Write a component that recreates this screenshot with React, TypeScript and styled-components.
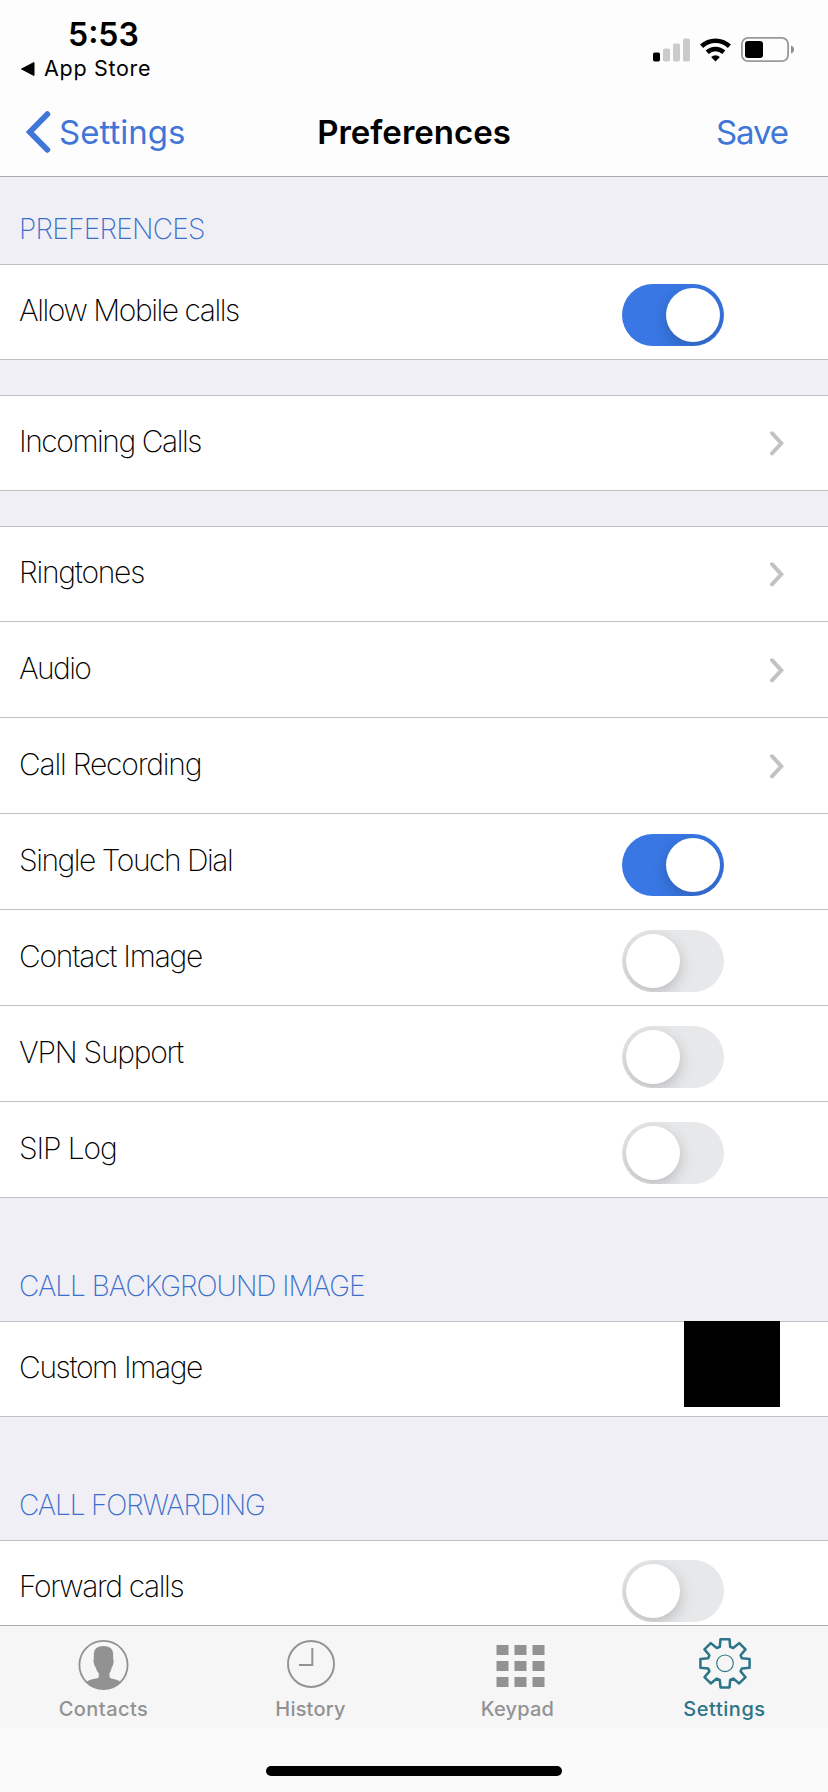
import React from "react";
import styled, { createGlobalStyle } from "styled-components";

const GlobalStyle = createGlobalStyle`
  * { box-sizing: border-box; }
  body { margin: 0; background: #f0eff5; }
`;

const Screen = styled.div`
  width: 828px;
  height: 1792px;
  display: flex;
  flex-direction: column;
  overflow: hidden;
  background: #f0eff5;
  color: #000;
  font-family: Inter, "Liberation Sans", sans-serif;
  white-space: nowrap;
`;

const Header = styled.header`
  height: 177px;
  flex: none;
  display: flex;
  flex-direction: column;
  background: #fdfdfd;
  border-bottom: 1px solid #a8a8ac;
`;

const StatusBar = styled.div`
  height: 88px;
  display: flex;
  justify-content: space-between;
  padding: 18px 34px 0 20px;
`;

const StatusLeft = styled.div`
  display: flex;
  flex-direction: column;
`;

const Time = styled.div`
  padding-left: 48px;
  font-size: 32px;
  line-height: 33px;
  font-weight: 600;
`;

const BackToApp = styled.div`
  display: flex;
  align-items: center;
  gap: 9px;
  padding-left: 1px;
  margin-top: 3px;
  font-size: 21.5px;
  line-height: 29px;
  font-weight: 400;
  letter-spacing: 0.7px;
`;

const StatusIcons = styled.div`
  display: flex;
  align-items: flex-end;
  height: 44px;
  gap: 10px;
`;

const NavBar = styled.nav`
  height: 88px;
  display: grid;
  grid-template-columns: 1fr auto 1fr;
  align-items: center;
  padding: 0 26px;
  font-size: 33px;
  line-height: 40px;
`;

const BackButton = styled.a`
  display: flex;
  align-items: center;
  gap: 8px;
  color: #3f76d8;
`;

const NavTitle = styled.h1`
  margin: 0;
  font-size: inherit;
  font-weight: 600;
`;

const SaveButton = styled.a`
  justify-self: end;
  margin-right: 14px;
  color: #3f76d8;
  letter-spacing: -1.1px;
`;

const Content = styled.main`
  flex: 1;
  min-height: 0;
  overflow: hidden;
`;

const SectionTitle = styled.h2<{ $height: number; $tracking: number }>`
  height: ${(p) => p.$height}px;
  margin: 0;
  padding: 0 0 20px 19px;
  display: flex;
  align-items: flex-end;
  font-size: 28px;
  line-height: 30px;
  font-weight: 200;
  letter-spacing: ${(p) => p.$tracking}px;
  color: #3a6fcb;
`;

const Group = styled.section`
  background: #fff;
  box-shadow: inset 0 1px #c1c1c5;
  & + & { margin-top: 35px; }
`;

const Row = styled.div`
  height: 96px;
  display: flex;
  align-items: flex-start;
  justify-content: space-between;
  border-bottom: 1px solid #c1c1c5;
`;

const RowLabel = styled.span<{ $tracking: number }>`
  padding-left: 19px;
  font-size: 30px;
  line-height: 92px;
  font-weight: 200;
  letter-spacing: ${(p) => p.$tracking}px;
`;

const Toggle = styled.span<{ $on?: boolean }>`
  width: 102px;
  height: 62px;
  margin: 20px 104px 0 0;
  padding: 4px;
  display: flex;
  justify-content: ${(p) => (p.$on ? "flex-end" : "flex-start")};
  border-radius: 31px;
  overflow: hidden;
  background: ${(p) => (p.$on ? "#3977e4" : "#e7e8ea")};
`;

const Knob = styled.span`
  width: 54px;
  height: 54px;
  border-radius: 50%;
  background: #fff;
  box-shadow: 0 5px 15px rgba(0, 0, 0, 0.2);
`;

const Disclosure = styled.svg`
  margin: 36px 44px 0 0;
`;

const ImageWell = styled.span`
  width: 96px;
  height: 86px;
  margin-right: 48px;
  background: #000;
`;

const TabBar = styled.footer`
  height: 167px;
  flex: none;
  display: flex;
  flex-direction: column;
  align-items: center;
  border-top: 1px solid #a9abac;
  background: linear-gradient(#f6f6f6 102px, #fafafa 102px);
`;

const Tabs = styled.div`
  width: 100%;
  height: 140px;
  display: grid;
  grid-template-columns: repeat(4, 1fr);
`;

const Tab = styled.a<{ $active?: boolean; $tracking: number }>`
  display: flex;
  flex-direction: column;
  align-items: center;
  padding-top: 10px;
  font-size: 20px;
  font-weight: 500;
  line-height: 26px;
  letter-spacing: ${(p) => p.$tracking}px;
  color: ${(p) => (p.$active ? "#2c7488" : "#929292")};
`;

const TabIcon = styled.svg`
  width: 60px;
  height: 56px;
  margin-bottom: 4px;
  overflow: visible;
`;

const HomeIndicator = styled.div`
  width: 296px;
  height: 10px;
  border-radius: 5px;
  background: #000;
`;

const SignalIcon = () => (
  <svg width="37" height="24" viewBox="0 0 37 24">
    <rect x="0" y="14.5" width="7" height="9" rx="1.7" fill="#000" />
    <g fill="#cbcbcb">
      <rect x="10" y="10.5" width="7" height="13" rx="1.7" />
      <rect x="20" y="5.5" width="7" height="18" rx="1.7" />
      <rect x="30" y="0.5" width="7" height="23" rx="1.7" />
    </g>
  </svg>
);

const WifiIcon = () => (
  <svg width="31" height="24" viewBox="0 0 31 24">
    <g fill="none" stroke="#000" strokeWidth="4.6">
      <path d="M1.6 8.2 A20.5 20.5 0 0 1 29.4 8.2" />
      <path d="M7.2 14.2 A12.3 12.3 0 0 1 23.8 14.2" />
    </g>
    <path d="M15.5 23.5 L11.1 19.1 Q15.5 15.4 19.9 19.1 Z" fill="#000" />
  </svg>
);

const BatteryIcon = () => (
  <svg width="53" height="25" viewBox="0 0 53 25">
    <rect x="0.9" y="0.9" width="46.2" height="23.2" rx="6.2" fill="none" stroke="#999" strokeWidth="1.8" />
    <rect x="4" y="4" width="18" height="17" rx="3" fill="#000" />
    <path d="M50 8.5 Q53 9.5 53 12.5 Q53 15.5 50 16.5 Z" fill="#8e8e8e" />
  </svg>
);

const Chevron = () => (
  <Disclosure width="14" height="25" viewBox="0 0 14 25" fill="none" stroke="#c2c2c4" strokeWidth="3.9" strokeLinecap="round" strokeLinejoin="miter">
    <path d="M2 2.2 L11.4 12.3 L2 22.4" />
  </Disclosure>
);

const gearPath = (() => {
  const profile: [number, number][] = [
    [-5.1, 16.5],
    [-4.4, 24.1],
    [4.4, 24.1],
    [5.1, 16.5],
  ];
  const points: string[] = [];
  for (let tooth = 0; tooth < 8; tooth++) {
    const a = (tooth * Math.PI) / 4;
    for (const [x, r] of profile) {
      const px = (x * Math.cos(a) + r * Math.sin(a)) * 1.02;
      const py = x * Math.sin(a) - r * Math.cos(a);
      points.push(`${px.toFixed(2)} ${py.toFixed(2)}`);
    }
  }
  return `M${points.join("L")}Z`;
})();

const ContactsIcon = () => (
  <TabIcon viewBox="0 0 60 56">
    <circle cx="29.5" cy="29" r="24.1" fill="none" stroke="currentColor" strokeWidth="1.8" />
    <path
      transform="translate(4.5 4) scale(0.3333)"
      fill="currentColor"
      d="M46 40 Q47 19 75 18 Q103 19 104 40 L104 57 Q107 60 104 73 Q103 80 100 81 Q98 93 93 100 L93 112 Q96 116 109 118 Q121 121 127 126 A73 73 0 0 1 23 126 Q29 121 41 118 Q58 116 61 112 L61 100 Q54 93 51 81 Q48 80 47 73 Q43 60 46 57 Z"
    />
  </TabIcon>
);

const HistoryIcon = () => (
  <TabIcon viewBox="0 0 60 56" fill="none" stroke="currentColor">
    <circle cx="30" cy="28" r="23" strokeWidth="1.9" />
    <path d="M31.3 12 V29 H18" strokeWidth="2" />
  </TabIcon>
);

const KeypadIcon = () => (
  <TabIcon viewBox="0 0 60 56" fill="currentColor">
    {[9, 25, 41].map((y) =>
      [8.5, 26.5, 44.5].map((x) => <rect key={`${x}-${y}`} x={x} y={y} width="12" height="10" />)
    )}
  </TabIcon>
);

const GearIcon = () => (
  <TabIcon viewBox="0 0 60 56" fill="none" stroke="currentColor">
    <g transform="translate(30 27.3)">
      <path d={gearPath} strokeWidth="2.5" strokeLinejoin="round" />
      <circle r="8.3" strokeWidth="1.1" />
    </g>
  </TabIcon>
);

type Control = "on" | "off" | "link" | "image";

const SettingRow = ({ label, control, tracking }: { label: string; control: Control; tracking: number }) => (
  <Row>
    <RowLabel $tracking={tracking}>{label}</RowLabel>
    {control === "link" && <Chevron />}
    {control === "image" && <ImageWell />}
    {(control === "on" || control === "off") && (
      <Toggle $on={control === "on"}>
        <Knob />
      </Toggle>
    )}
  </Row>
);

export default function App() {
  return (
    <Screen>
      <GlobalStyle />
      <Header>
        <StatusBar>
          <StatusLeft>
            <Time>5:53</Time>
            <BackToApp>
              <svg width="14" height="14" viewBox="0 0 14 14">
                <path d="M0.5 7 L13 0.5 V13.5 Z" stroke="#000" strokeLinejoin="round" />
              </svg>
              App Store
            </BackToApp>
          </StatusLeft>
          <StatusIcons>
            <SignalIcon />
            <WifiIcon />
            <BatteryIcon />
          </StatusIcons>
        </StatusBar>
        <NavBar>
          <BackButton>
            <svg width="25" height="42" viewBox="0 0 25 42" fill="none" stroke="currentColor" strokeWidth="5.8" strokeLinecap="round">
              <path d="M21.3 3.2 L3.8 21 L21.3 38.8" />
            </svg>
            Settings
          </BackButton>
          <NavTitle>Preferences</NavTitle>
          <SaveButton>Save</SaveButton>
        </NavBar>
      </Header>

      <Content>
        <SectionTitle $height={87} $tracking={-0.75}>PREFERENCES</SectionTitle>
        <Group>
          <SettingRow label="Allow Mobile calls" control="on" tracking={-1.45} />
        </Group>
        <Group>
          <SettingRow label="Incoming Calls" control="link" tracking={-1.45} />
        </Group>
        <Group>
          <SettingRow label="Ringtones" control="link" tracking={-1.25} />
          <SettingRow label="Audio" control="link" tracking={-1.6} />
          <SettingRow label="Call Recording" control="link" tracking={-1.2} />
          <SettingRow label="Single Touch Dial" control="on" tracking={-1.48} />
          <SettingRow label="Contact Image" control="off" tracking={-1.24} />
          <SettingRow label="VPN Support" control="off" tracking={-1.27} />
          <SettingRow label="SIP Log" control="off" tracking={-1.13} />
        </Group>

        <SectionTitle $height={123} $tracking={-1}>CALL BACKGROUND IMAGE</SectionTitle>
        <Group>
          <SettingRow label="Custom Image" control="image" tracking={-1.37} />
        </Group>

        <SectionTitle $height={123} $tracking={-1.15}>CALL FORWARDING</SectionTitle>
        <Group>
          <SettingRow label="Forward calls" control="off" tracking={-1.4} />
        </Group>
      </Content>

      <TabBar>
        <Tabs>
          <Tab $tracking={0.45}>
            <ContactsIcon />
            Contacts
          </Tab>
          <Tab $tracking={0.2}>
            <HistoryIcon />
            History
          </Tab>
          <Tab $tracking={0.2}>
            <KeypadIcon />
            Keypad
          </Tab>
          <Tab $active $tracking={0.55}>
            <GearIcon />
            Settings
          </Tab>
        </Tabs>
        <HomeIndicator />
      </TabBar>
    </Screen>
  );
}
